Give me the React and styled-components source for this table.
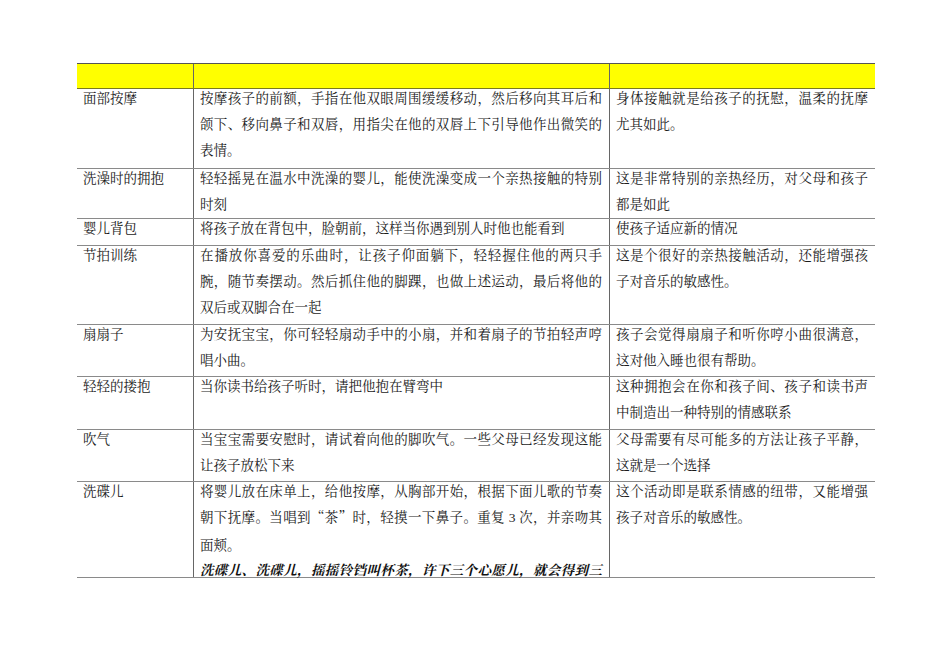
import React from "react";
import styled, { createGlobalStyle } from "styled-components";

const GlobalStyle = createGlobalStyle`
	html, body {
		margin: 0;
		padding: 0;
		background: #ffffff;
	}
	body {
		font-family: "Noto Serif CJK SC", "Noto Sans CJK SC", "Liberation Serif", serif;
		color: #1a1a1a;
	}
`;

const Page = styled.div`
	width: 950px;
	height: 672px;
	padding: 63px 0 0 77px;
	box-sizing: border-box;
`;

const Table = styled.div`
	width: 798px;
	border-top: 1px solid #555;
`;

const Row = styled.div`
	display: grid;
	grid-template-columns: 116px 416px 266px;
	grid-template-rows: minmax(0, 1fr);
	height: ${({ h }) => h}px;
	box-sizing: border-box;
	border-bottom: 1px solid ${({ head }) => (head ? "#7a7a20" : "#8a8a8a")};
	background: ${({ head }) => (head ? "#ffff00" : "transparent")};
`;

const Cell = styled.div`
	padding: 0 7px 0 6px;
	border-left: ${({ first }) => (first ? "none" : "1px solid #666")};
	font-size: 13.5px;
	line-height: 26px;
	min-height: 0;
`;

const Lines = styled.div`
	margin-top: -5px;
`;

const Line = styled.div`
	white-space: nowrap;
	text-align: justify;
	text-align-last: ${({ full }) => (full ? "justify" : "left")};
	font-style: ${({ em }) => (em ? "italic" : "normal")};
	font-weight: ${({ em }) => (em ? 700 : 400)};
	line-height: ${({ em }) => (em ? "24px" : "inherit")};
	color: ${({ em }) => (em ? "#111" : "inherit")};
`;

const Num = styled.span`
	font-family: "Liberation Serif", serif;
`;

const rows = [
	{
		h: 80,
		name: "面部按摩",
		desc: [
			"按摩孩子的前额，手指在他双眼周围缓缓移动，然后移向其耳后和",
			"颌下、移向鼻子和双唇，用指尖在他的双唇上下引导他作出微笑的",
			"表情。",
		],
		note: ["身体接触就是给孩子的抚慰，温柔的抚摩", "尤其如此。"],
	},
	{
		h: 50,
		name: "洗澡时的拥抱",
		desc: ["轻轻摇晃在温水中洗澡的婴儿，能使洗澡变成一个亲热接触的特别", "时刻"],
		note: ["这是非常特别的亲热经历，对父母和孩子", "都是如此"],
	},
	{
		h: 27,
		name: "婴儿背包",
		desc: ["将孩子放在背包中，脸朝前，这样当你遇到别人时他也能看到"],
		note: ["使孩子适应新的情况"],
	},
	{
		h: 79,
		name: "节拍训练",
		desc: [
			"在播放你喜爱的乐曲时，让孩子仰面躺下，轻轻握住他的两只手",
			"腕，随节奏摆动。然后抓住他的脚踝，也做上述运动，最后将他的",
			"双后或双脚合在一起",
		],
		note: ["这是个很好的亲热接触活动，还能增强孩", "子对音乐的敏感性。"],
	},
	{
		h: 52,
		name: "扇扇子",
		desc: ["为安抚宝宝，你可轻轻扇动手中的小扇，并和着扇子的节拍轻声哼", "唱小曲。"],
		note: ["孩子会觉得扇扇子和听你哼小曲很满意，", "这对他入睡也很有帮助。"],
	},
	{
		h: 53,
		name: "轻轻的搂抱",
		desc: ["当你读书给孩子听时，请把他抱在臂弯中"],
		note: ["这种拥抱会在你和孩子间、孩子和读书声", "中制造出一种特别的情感联系"],
	},
	{
		h: 52,
		name: "吹气",
		desc: ["当宝宝需要安慰时，请试着向他的脚吹气。一些父母已经发现这能", "让孩子放松下来"],
		note: ["父母需要有尽可能多的方法让孩子平静，", "这就是一个选择"],
	},
	{
		h: 96,
		name: "洗碟儿",
		desc: [
			"将婴儿放在床单上，给他按摩，从胸部开始，根据下面儿歌的节奏",
			<>
				朝下抚摩。当唱到“茶”时，轻摸一下鼻子。重复<Num> 3 </Num>次，并亲吻其
			</>,
			"面颊。",
		],
		em: "洗碟儿、洗碟儿，摇摇铃铛叫杯茶，许下三个心愿儿，就会得到三",
		note: ["这个活动即是联系情感的纽带，又能增强", "孩子对音乐的敏感性。"],
	},
];

const TextBlock = ({ lines, em }) => (
	<Lines>
		{lines.map((t, i) => (
			<Line key={i} full={i < lines.length - 1}>
				{t}
			</Line>
		))}
		{em && (
			<Line em full>
				{em}
			</Line>
		)}
	</Lines>
);

const App = () => (
	<>
		<GlobalStyle />
		<Page lang="zh-CN">
			<Table>
				<Row head h={25}>
					<Cell first />
					<Cell />
					<Cell />
				</Row>
				{rows.map((r, i) => (
					<Row key={i} h={r.h}>
						<Cell first>
							<TextBlock lines={[r.name]} />
						</Cell>
						<Cell>
							<TextBlock lines={r.desc} em={r.em} />
						</Cell>
						<Cell>
							<TextBlock lines={r.note} />
						</Cell>
					</Row>
				))}
			</Table>
		</Page>
	</>
);

export default App;
